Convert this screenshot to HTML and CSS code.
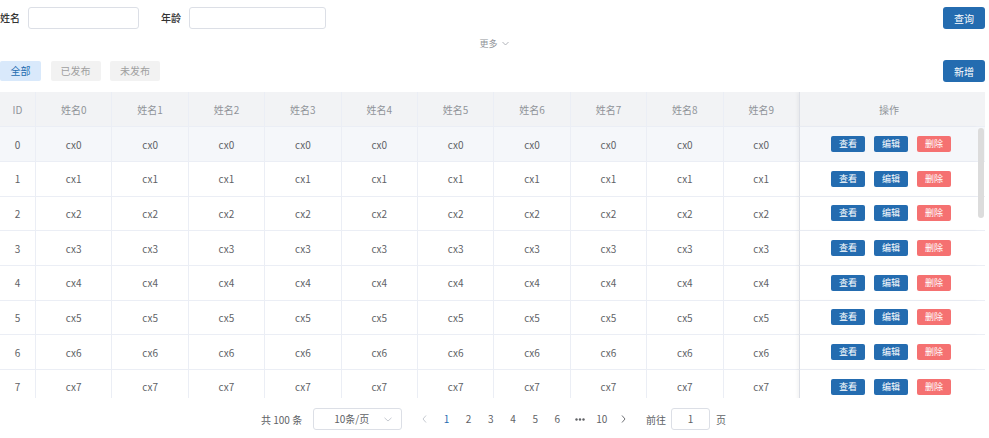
FILE: index.html
```html
<!DOCTYPE html>
<html lang="zh">
<head>
<meta charset="utf-8">
<link rel="stylesheet" href="styles.css">
</head>
<body>
<div class="page">
  <div class="search">
    <span class="lbl">姓名</span><span class="inp w1"></span>
    <span class="lbl l2">年龄</span><span class="inp w2"></span>
    <button class="btn primary right">查询</button>
  </div>
  <div class="more">更多 <svg width="7" height="5" viewBox="0 0 7 5"><path d="M0.5 1 L3.5 4 L6.5 1" fill="none" stroke="#a8abb2" stroke-width="0.9"/></svg></div>
  <div class="toolbar">
    <span class="tab active">全部</span>
    <span class="tab">已发布</span>
    <span class="tab">未发布</span>
    <button class="btn primary right">新增</button>
  </div>
  <div class="table" id="table">
    <div class="row head">
      <div class="c">ID</div>
      <div class="c">姓名0</div><div class="c">姓名1</div><div class="c">姓名2</div><div class="c">姓名3</div><div class="c">姓名4</div>
      <div class="c">姓名5</div><div class="c">姓名6</div><div class="c">姓名7</div><div class="c">姓名8</div><div class="c">姓名9</div>
      <div class="c ops">操作</div>
      <div class="gut"></div>
    </div>
    <div class="body" id="body"></div>
    <div class="sbar"></div>
  </div>
  <div class="pager">
    <span class="total">共 100 条</span>
    <span class="sel">10条/页<svg class="sarr" width="8" height="5" viewBox="0 0 8 5"><path d="M0.5 0.8 L4 4 L7.5 0.8" fill="none" stroke="#c0c4cc" stroke-width="0.9"/></svg></span>
    <span class="pg arrow"><svg width="5" height="8" viewBox="0 0 5 8"><path d="M4 0.5 L1 4 L4 7.5" fill="none" stroke="#c0c4cc" stroke-width="0.9"/></svg></span>
    <span class="pg cur">1</span><span class="pg">2</span><span class="pg">3</span><span class="pg">4</span><span class="pg">5</span><span class="pg">6</span>
    <span class="pg dots"><svg width="10" height="3" viewBox="0 0 10 3"><circle cx="1.5" cy="1.5" r="1.2" fill="#606266"/><circle cx="5" cy="1.5" r="1.2" fill="#606266"/><circle cx="8.5" cy="1.5" r="1.2" fill="#606266"/></svg></span><span class="pg">10</span>
    <span class="pg arrow"><svg width="5" height="8" viewBox="0 0 5 8"><path d="M1 0.5 L4 4 L1 7.5" fill="none" stroke="#606266" stroke-width="0.9"/></svg></span>
    <span class="goto">前往</span><span class="ginp">1</span><span class="gpage">页</span>
  </div>
</div>
<script>
var b = document.getElementById('body');
var h = '';
for (var i = 0; i < 8; i++) {
  h += '<div class="row' + (i === 0 ? ' hover' : '') + '"><div class="c">' + i + '</div>';
  for (var j = 0; j < 10; j++) h += '<div class="c">cx' + i + '</div>';
  h += '<div class="c ops"><span class="ab blue">查看</span><span class="ab blue">编辑</span><span class="ab red">删除</span></div><div class="gut"></div></div>';
}
b.innerHTML = h;
</script>
</body>
</html>
```

FILE: styles.css
```css
* { box-sizing: border-box; }
html, body { margin: 0; padding: 0; background: #fff; }
body {
  font-family: "Noto Sans CJK SC", "Noto Sans", sans-serif;
  font-size: 10px;
  color: #606266;
  width: 989px;
  height: 438px;
  overflow: hidden;
}
.page { width: 986px; }
.search {
  display: flex;
  align-items: center;
  height: 22px;
  margin-top: 7px;
}
.lbl { color: #333; font-weight: 500; line-height: 22px; width: 20px; margin-right: 8px; }
.lbl.l2 { margin-left: 22px; }
.inp {
  display: block;
  height: 22px;
  border: 1px solid #dcdfe6;
  border-radius: 3px;
  background: #fff;
}
.w1 { width: 111px; }
.w2 { width: 137px; }
.btn {
  border: 0;
  font-family: inherit;
  font-size: 10px;
  color: #fff;
  height: 22px;
  width: 42px;
  border-radius: 3px;
  padding: 0;
}
.primary { background: #246cb0; }
.right { margin-left: auto; margin-right: 1px; }
.more {
  height: 12px;
  margin-top: 9px;
  line-height: 12px;
  text-align: center;
  color: #909399;
  font-size: 9px;
  padding-left: 2px;
}
.more svg { vertical-align: 1px; margin-left: 2px; }
.toolbar {
  display: flex;
  align-items: center;
  height: 22px;
  margin-top: 10px;
}
.tab {
  height: 20px;
  line-height: 20px;
  padding: 0 10px;
  margin-right: 9.5px;
  border-radius: 2px;
  background: #f2f2f2;
  color: #a0a0a0;
}
.tab.active { background: #d9e9fb; color: #246cb0; padding: 0 10.5px; }
.table {
  position: relative;
  margin-top: 10px;
  height: 306px;
  overflow: hidden;
  width: 985px;
}
.row {
  display: grid;
  grid-template-columns: 36px repeat(10, 76.4px) 178px 7px;
  height: 34.7px;
}
.row.head { height: 35.2px; background: #f2f3f5; color: #909399; }
.row.hover { background: #f5f7fa; }
.c {
  display: flex;
  align-items: center;
  justify-content: center;
  border-right: 1px solid #ebeef5;
  border-bottom: 1px solid #ebeef5;
}
.c.ops { border-right: 0; border-left: 1px solid #dcdfe6; box-shadow: -2px 0 3px rgba(0,0,0,0.04); margin-left: -1px; gap: 9px; padding-left: 4px; }
.row.head .c.ops { padding-left: 0; }
.row:not(.head) .c.ops { background: #fff; }
.row.hover .c.ops { background: #f5f7fa; }
.gut { border-bottom: 1px solid #ebeef5; }
.row.head .gut { background: #f2f3f5; }
.ab {
  display: inline-block;
  width: 34px;
  height: 16px;
  line-height: 16px;
  text-align: center;
  color: #fff;
  font-size: 9px;
  border-radius: 2px;
}
.ab.blue { background: #246cb0; }
.ab.red { background: #f57171; }
.sbar {
  position: absolute;
  left: 978px;
  top: 36px;
  width: 6px;
  height: 90px;
  border-radius: 3px;
  background: #dcdcdc;
}
.pager {
  display: flex;
  align-items: center;
  height: 22px;
  margin-top: 10px;
  padding-left: 261px;
  color: #606266;
}
.total { margin-right: 11px; }
.sel {
  position: relative;
  width: 89px;
  height: 22px;
  border: 1px solid #dcdfe6;
  border-radius: 3px;
  line-height: 20px;
  padding-left: 20px;
  margin-right: 11px;
}
.sarr { position: absolute; right: 9px; top: 8px; }
.pg {
  width: 22.2px;
  text-align: center;
  line-height: 22px;
  color: #606266;
}
.pg.cur { color: #246cb0; }
.pg.dots, .pg.arrow { display: flex; justify-content: center; align-items: center; height: 22px; }
.goto { margin-left: 11px; margin-right: 5px; }
.ginp {
  width: 39px;
  height: 22px;
  border: 1px solid #dcdfe6;
  border-radius: 3px;
  text-align: center;
  line-height: 20px;
}
.gpage { margin-left: 6px; }
```
